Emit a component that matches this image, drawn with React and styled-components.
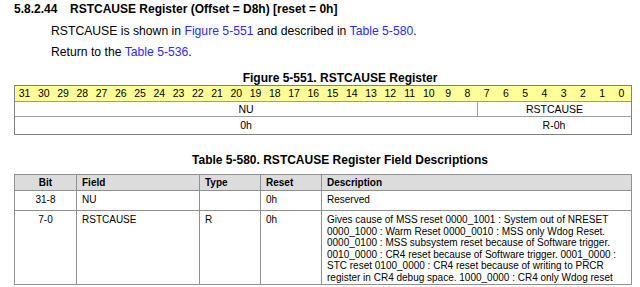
import React from 'react';
import styled, { createGlobalStyle } from 'styled-components';

const GlobalStyle = createGlobalStyle`
  html, body {
    margin: 0;
    padding: 0;
    background: #fff;
  }
  body {
    font-family: "Liberation Sans", Arial, sans-serif;
    color: #000;
  }
`;

const Page = styled.div`
  width: 640px;
  height: 287px;
  overflow: hidden;
  padding: 2px 8px 0 14px;
  box-sizing: border-box;
`;

const Heading = styled.h4`
  margin: 0;
  font-size: 12px;
  line-height: 14px;
  font-weight: bold;
  display: flex;
`;

const SectionNum = styled.span`
  width: 56px;
`;

const Para = styled.p`
  margin: ${(p) => p.$top || 0}px 0 0 37px;
  font-size: 12.2px;
  line-height: 14px;
`;

const Link = styled.a`
  color: #2b2bf5;
  text-decoration: none;
`;

const Caption = styled.div`
  margin-top: ${(p) => p.$top}px;
  padding-left: 34px;
  text-align: center;
  font-size: 12px;
  line-height: 14px;
  font-weight: bold;
`;

const Register = styled.div`
  width: 618px;
  display: grid;
  grid-template-columns: repeat(32, 1fr);
  border: 1px solid #808080;
  box-sizing: border-box;
  font-size: 10.5px;
`;

const BitCell = styled.div`
  background: #ffff99;
  height: 15px;
  line-height: 15px;
  text-align: center;
  border-bottom: 1px solid #9a9a9a;
`;

const FieldCell = styled.div`
  grid-column: span ${(p) => p.$span};
  height: ${(p) => p.$h}px;
  line-height: ${(p) => p.$h}px;
  text-align: center;
  border-left: ${(p) => (p.$divider ? '1px solid #a0a0a0' : 'none')};
  border-bottom: ${(p) => (p.$last ? 'none' : '1px solid #a0a0a0')};
`;

const Table = styled.table`
  margin-top: 7px;
  width: 618px;
  border-collapse: collapse;
  table-layout: fixed;
  font-size: 10px;
  border: 1px solid #808080;
`;

const Th = styled.th`
  background: #dcdcdc;
  height: 15px;
  padding: 0 5px;
  line-height: 12px;
  font-weight: bold;
  text-align: ${(p) => (p.$center ? 'center' : 'left')};
  border: 1px solid #909090;
`;

const Td = styled.td`
  height: ${(p) => p.$h}px;
  padding: 3px 5px 0;
  vertical-align: top;
  line-height: 11.6px;
  text-align: ${(p) => (p.$center ? 'center' : 'left')};
  border: 1px solid #909090;
  box-sizing: border-box;
`;

const bits = Array.from({ length: 32 }, (_, i) => 31 - i);

const rows = [
  { bit: '31-8', field: 'NU', type: '', reset: '0h', desc: 'Reserved', h: 20 },
  {
    bit: '7-0',
    field: 'RSTCAUSE',
    type: 'R',
    reset: '0h',
    desc:
      'Gives cause of MSS reset 0000_1001 : System out of NRESET 0000_1000 : Warm Reset 0000_0010 : MSS only Wdog Reset. 0000_0100 : MSS subsystem reset because of Software trigger. 0010_0000 : CR4 reset because of Software trigger. 0001_0000 : STC reset 0100_0000 : CR4 reset because of writing to PRCR register in CR4 debug space. 1000_0000 : CR4 only Wdog reset',
    h: 74,
  },
];

export default function App() {
  return (
    <Page>
      <GlobalStyle />
      <Heading>
        <SectionNum>5.8.2.44</SectionNum>
        RSTCAUSE Register (Offset = D8h) [reset = 0h]
      </Heading>
      <Para $top={8}>
        RSTCAUSE is shown in <Link>Figure 5-551</Link> and described in <Link>Table 5-580</Link>.
      </Para>
      <Para $top={7}>
        Return to the <Link>Table 5-536</Link>.
      </Para>

      <Caption $top={12}>Figure 5-551. RSTCAUSE Register</Caption>
      <Register>
        {bits.map((b) => (
          <BitCell key={b}>{b}</BitCell>
        ))}
        <FieldCell $span={24} $h={14}>NU</FieldCell>
        <FieldCell $span={8} $h={14} $divider>RSTCAUSE</FieldCell>
        <FieldCell $span={24} $h={17} $last>0h</FieldCell>
        <FieldCell $span={8} $h={17} $last>R-0h</FieldCell>
      </Register>

      <Caption $top={18}>Table 5-580. RSTCAUSE Register Field Descriptions</Caption>
      <Table>
        <colgroup>
          <col style={{ width: 62 }} />
          <col style={{ width: 123 }} />
          <col style={{ width: 61 }} />
          <col style={{ width: 61 }} />
          <col />
        </colgroup>
        <thead>
          <tr>
            <Th $center>Bit</Th>
            <Th>Field</Th>
            <Th>Type</Th>
            <Th>Reset</Th>
            <Th>Description</Th>
          </tr>
        </thead>
        <tbody>
          {rows.map((r) => (
            <tr key={r.bit}>
              <Td $h={r.h} $center>{r.bit}</Td>
              <Td $h={r.h}>{r.field}</Td>
              <Td $h={r.h}>{r.type}</Td>
              <Td $h={r.h}>{r.reset}</Td>
              <Td $h={r.h}>{r.desc}</Td>
            </tr>
          ))}
        </tbody>
      </Table>
    </Page>
  );
}
